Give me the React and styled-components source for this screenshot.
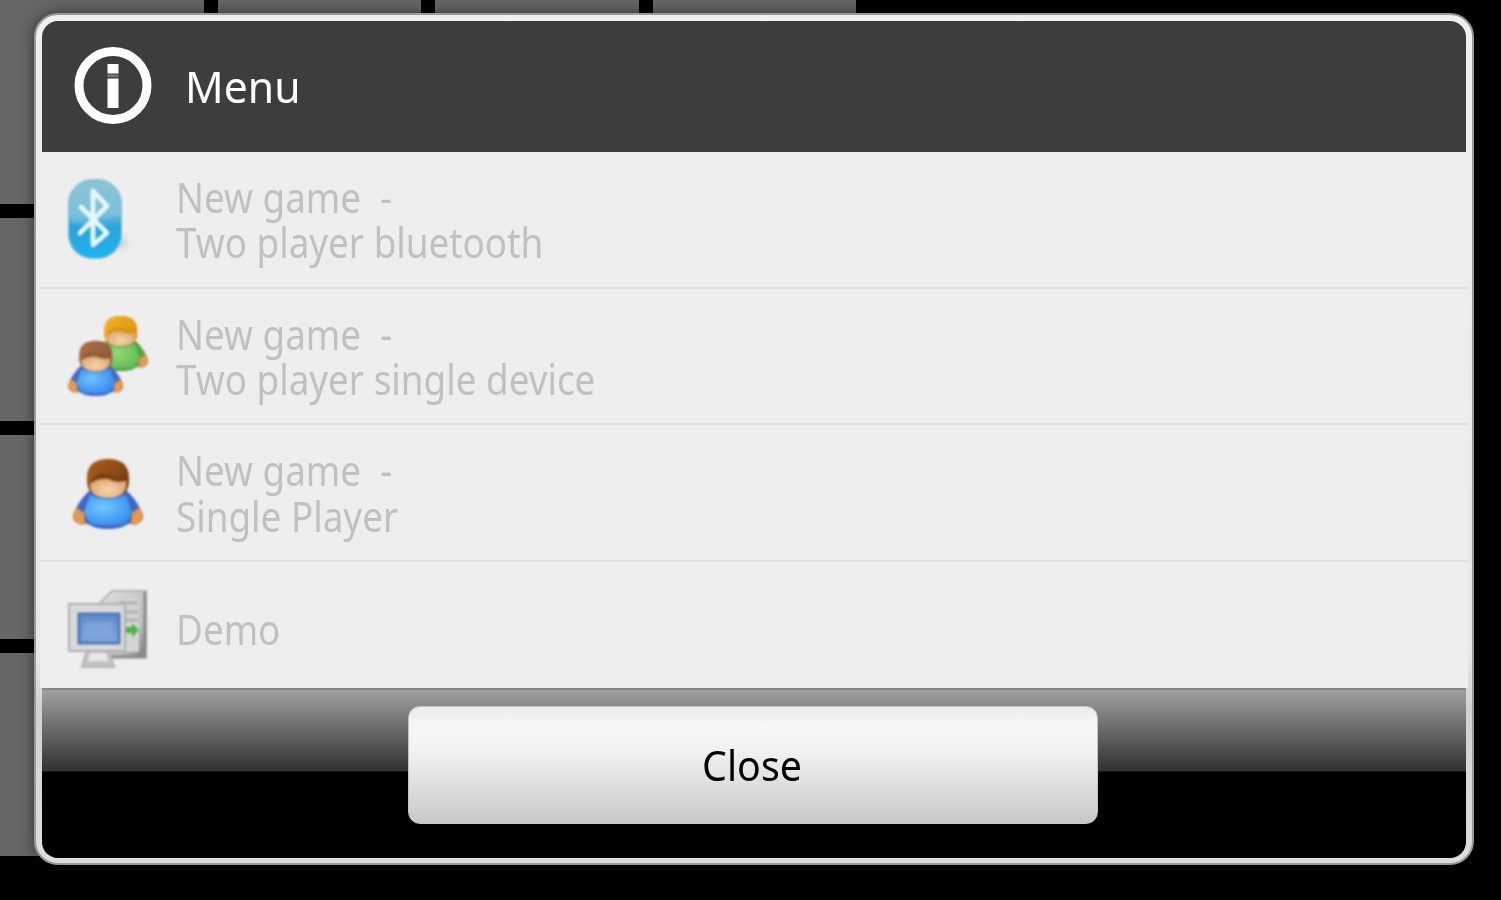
import React from 'react';
import styled, { createGlobalStyle } from 'styled-components';

const GlobalStyle = createGlobalStyle`
  body {
    margin: 0;
    background-color: #000;
    font-family: 'Noto Sans', 'Open Sans', sans-serif;
    overflow: hidden;
  }

  * {
    box-sizing: border-box;
  }
`;

const InfoIcon = () => (
  <svg width='80' height='80' viewBox='0 0 80 80'>
    <circle cx='40' cy='39.5' r='34' fill='none' stroke='#fff' strokeWidth='9' />
    <path d='M34.5 18h11v9.500h-11zM34.5 32.500h11v29.500h-11z' fill='#fff' />
    <path d='M34.5 28.500h11v2.500h-11z' fill='#777' />
  </svg>
);

const BluetoothIcon = () => (
  <SoftSvg width='80' height='80' viewBox='0 0 80 80'>
    <defs>
      <linearGradient id='btFill' x1='0' y1='0' x2='0' y2='1'>
        <stop offset='0' stopColor='#80bcd2' />
        <stop offset='0.45' stopColor='#6db9d9' />
        <stop offset='0.6' stopColor='#2ba3da' />
        <stop offset='1' stopColor='#20b3f0' />
      </linearGradient>
      <radialGradient id='btShade'>
        <stop offset='0' stopColor='#ccc' />
        <stop offset='1' stopColor='#eee' stopOpacity='0' />
      </radialGradient>
    </defs>
    <ellipse cx='53' cy='64' rx='13' ry='13' fill='url(#btShade)' />
    <rect x='0.5' y='0.5' width='53' height='79' rx='24' fill='url(#btFill)' stroke='#8ac6dc' />
    <path d='M2 43V25Q3 2 27 2T52 25V36Q40 39 28 43T2 43Z' fill='#fff' opacity='0.1' />
    <path
      d='M13 28L39 54L25 66V12L39 27L12 54'
      fill='none' stroke='#e6f7fc' strokeWidth='4.800' strokeLinejoin='round' strokeLinecap='round'
    />
  </SoftSvg>
);

const Person = ({ id, hair, hairLight, shirt, shirtLight, edge }) => (
  <g>
    <defs>
      <radialGradient id={`${id}Shirt`} cx='0.4' cy='0.4' r='0.7'>
        <stop offset='0' stopColor={shirtLight} />
        <stop offset='1' stopColor={shirt} />
      </radialGradient>
      <radialGradient id={`${id}Face`} cx='0.5' cy='0.65' r='0.6'>
        <stop offset='0' stopColor='#f6d6b0' />
        <stop offset='1' stopColor='#dca26c' />
      </radialGradient>
      <linearGradient id={`${id}Hair`} x1='0' y1='0' x2='1' y2='0.6'>
        <stop offset='0' stopColor={hairLight} />
        <stop offset='1' stopColor={hair} />
      </linearGradient>
    </defs>
    <path d='M17 32Q8 40 2 52L9 64L17 67Q22 71 35 71T53 67L61 64L68 52Q62 40 53 32Z' fill={edge} />
    <path d='M4 50Q-1 56 1 62Q5 67 12 66L11 55Z' fill='#e09a58' stroke='#cf8240' />
    <path d='M66 50Q71 56 69 62Q65 67 58 66L59 55Z' fill='#e09a58' stroke='#cf8240' />
    <path d='M17 37Q34 45 53 37L59 54Q55 65 49 67H21Q15 65 11 54Z' fill={`url(#${id}Shirt)`} />
    <path d='M14 20Q14 1 35 1T56 20Q57 31 50 36H20Q13 31 14 20Z' fill={`url(#${id}Hair)`} />
    <path d='M17 26Q19 18 31 18Q40 22 53 20Q56 40 35 40Q17 40 17 26Z' fill={`url(#${id}Face)`} />
    <path d='M17 26Q20 15 31 15Q40 18 54 18L53 23Q42 25 36 21Q24 20 17 26Z' fill={hair} />
  </g>
);

const TwoPlayerIcon = () => (
  <SoftSvg width='80' height='80' viewBox='0 0 80 80'>
    <g transform='translate(25 -1) scale(0.79)'>
      <Person id='green' hair='#dc9416' hairLight='#f0b52a' shirt='#63b951' shirtLight='#91da78' edge='#53a34b' />
    </g>
    <g transform='translate(0 24) scale(0.79)'>
      <Person id='blue' hair='#93593a' hairLight='#ad7048' shirt='#3289ed' shirtLight='#72c1ff' edge='#466bc8' />
    </g>
  </SoftSvg>
);

const SinglePlayerIcon = () => (
  <SoftSvg width='80' height='80' viewBox='0 0 80 80'>
    <g transform='translate(5 5)'>
      <Person id='single' hair='#7e410f' hairLight='#aa611f' shirt='#328bea' shirtLight='#72c8ff' edge='#4265c9' />
    </g>
  </SoftSvg>
);

const DemoIcon = () => (
  <SoftSvg width='80' height='80' viewBox='0 0 80 80'>
    <defs>
      <linearGradient id='tower' x1='0' y1='0' x2='1' y2='1'>
        <stop offset='0' stopColor='#e0e0e0' />
        <stop offset='0.7' stopColor='#bdbdbd' />
        <stop offset='1' stopColor='#777' />
      </linearGradient>
      <linearGradient id='screen' x1='0' y1='0' x2='0' y2='1'>
        <stop offset='0' stopColor='#5f8bc8' />
        <stop offset='1' stopColor='#7fa9df' />
      </linearGradient>
    </defs>
    <path d='M32 14L44 2H78V68H43L32 60Z' fill='url(#tower)' stroke='#b5b5b5' strokeWidth='2' />
    <path d='M77 3V68H44' fill='none' stroke='#8a8a8a' strokeWidth='3' />
    <path d='M50 9H71V63H50Z' fill='#d3d3d3' />
    <path d='M51 14H70M51 23H70M58 31H70' stroke='#b0b0b0' strokeWidth='3' />
    <path d='M19 61H41L46 78H14Z' fill='#c4c4c4' stroke='#b5b5b5' strokeWidth='2' />
    <path d='M22 64H38L40 72H20Z' fill='#e8e8e8' />
    <path d='M1 15H57V62H1Z' fill='#d9d9d9' stroke='#b0b0b0' strokeWidth='2' />
    <path d='M11 25H51V54H11Z' fill='url(#screen)' stroke='#5079b8' strokeWidth='3' />
    <path d='M17 33H44V47H17Z' fill='#85ace0' opacity='0.6' />
    <path d='M58 38H64V34L71 41L64 48V44H58Z' fill='#4bb548' />
  </SoftSvg>
);

const items = [
  { Icon: BluetoothIcon, label: 'New game\u00a0 -\nTwo player bluetooth' },
  { Icon: TwoPlayerIcon, label: 'New game\u00a0 -\nTwo player single device' },
  { Icon: SinglePlayerIcon, label: 'New game\u00a0 -\nSingle Player' },
  { Icon: DemoIcon, label: 'Demo', last: true },
];

const App = () => (
  <Screen>
    <GlobalStyle />
    <Board>
      {Array.from({ length: 16 }, (_, i) => (
        <Cell key={i} />
      ))}
    </Board>
    <Dialog>
      <Header>
        <InfoIcon />
        <Title>Menu</Title>
      </Header>
      <List>
        {items.map(({ Icon, label, last }) => (
          <Item key={label} $last={last}>
            <Icon />
            <Label>{label}</Label>
          </Item>
        ))}
      </List>
      <Footer>
        <CloseButton>
          <CloseText>Close</CloseText>
        </CloseButton>
      </Footer>
    </Dialog>
  </Screen>
);

const Screen = styled.div`
  position: relative;
  width: 1501px;
  height: 900px;
  overflow: hidden;
  background-color: #000;
`;

const Board = styled.div`
  display: grid;
  grid-template-columns: repeat(4, 1fr);
  grid-template-rows: repeat(4, 1fr);
  gap: 14px;
  width: 856px;
  height: 856px;
`;

const Cell = styled.div`
  background-color: #666;
`;

const Dialog = styled.div`
  position: absolute;
  top: 13px;
  left: 34px;
  display: flex;
  flex-direction: column;
  width: 1440px;
  height: 852px;
  padding: 6px 6px 5px 6px;
  border: 2px solid #999;
  border-radius: 24px;
  background: linear-gradient(#f0f0f0, #e8e8e8 75%, #d2d2d2 82%, #dedede);
  box-shadow: 0 0 14px rgba(0, 0, 0, 0.5);
`;

const Header = styled.div`
  display: flex;
  align-items: center;
  flex: none;
  height: 131px;
  padding: 0 0 1px 31px;
  border-radius: 16px 16px 0 0;
  background-color: #3d3d3d;
`;

const Title = styled.div`
  margin-left: 32px;
  color: #fff;
  font-size: 44px;
  line-height: 60px;
  transform: scaleX(0.97);
  transform-origin: left;
`;

const List = styled.div`
  display: flex;
  flex-direction: column;
  flex: none;
  height: 536px;
  margin: 0 -2px;
  background-color: #eee;
`;

const Item = styled.div`
  display: flex;
  align-items: center;
  flex: none;
  height: ${(props) => (props.$last ? '126px' : '136.700px')};
  padding: ${(props) => (props.$last ? '7px' : '0')} 0 0 28px;
  border-bottom: ${(props) => (props.$last ? 'none' : '2px solid #dfdfdf')};

  > svg {
    flex: none;
  }
`;

const SoftSvg = styled.svg`
  filter: blur(1px);
`;

const Label = styled.div`
  margin: 2px 0 0 28px;
  color: #c0c0c0;
  font-size: 41px;
  line-height: 45.500px;
  white-space: pre;
  transform: scaleX(0.898);
  transform-origin: left;
`;

const Footer = styled.div`
  display: flex;
  flex: 1;
  justify-content: center;
  align-items: flex-start;
  padding: 16px 3px 0 0;
  border-top: 2px solid #858585;
  border-radius: 0 0 16px 16px;
  background: linear-gradient(#a0a0a0, #353535 78px, #333 81px, #000 82px);
`;

const CloseButton = styled.button`
  width: 690px;
  height: 118px;
  padding: 0;
  border: 1px solid #c4c4c4;
  border-radius: 12px;
  background: linear-gradient(#ececec, #f7f7f7 18%, #f0f0f0 40%, #c8c8c8);
  color: #000;
  font-family: inherit;
  font-size: 41px;
`;

const CloseText = styled.span`
  display: inline-block;
  transform: scaleX(0.96);
`;

export default App;
